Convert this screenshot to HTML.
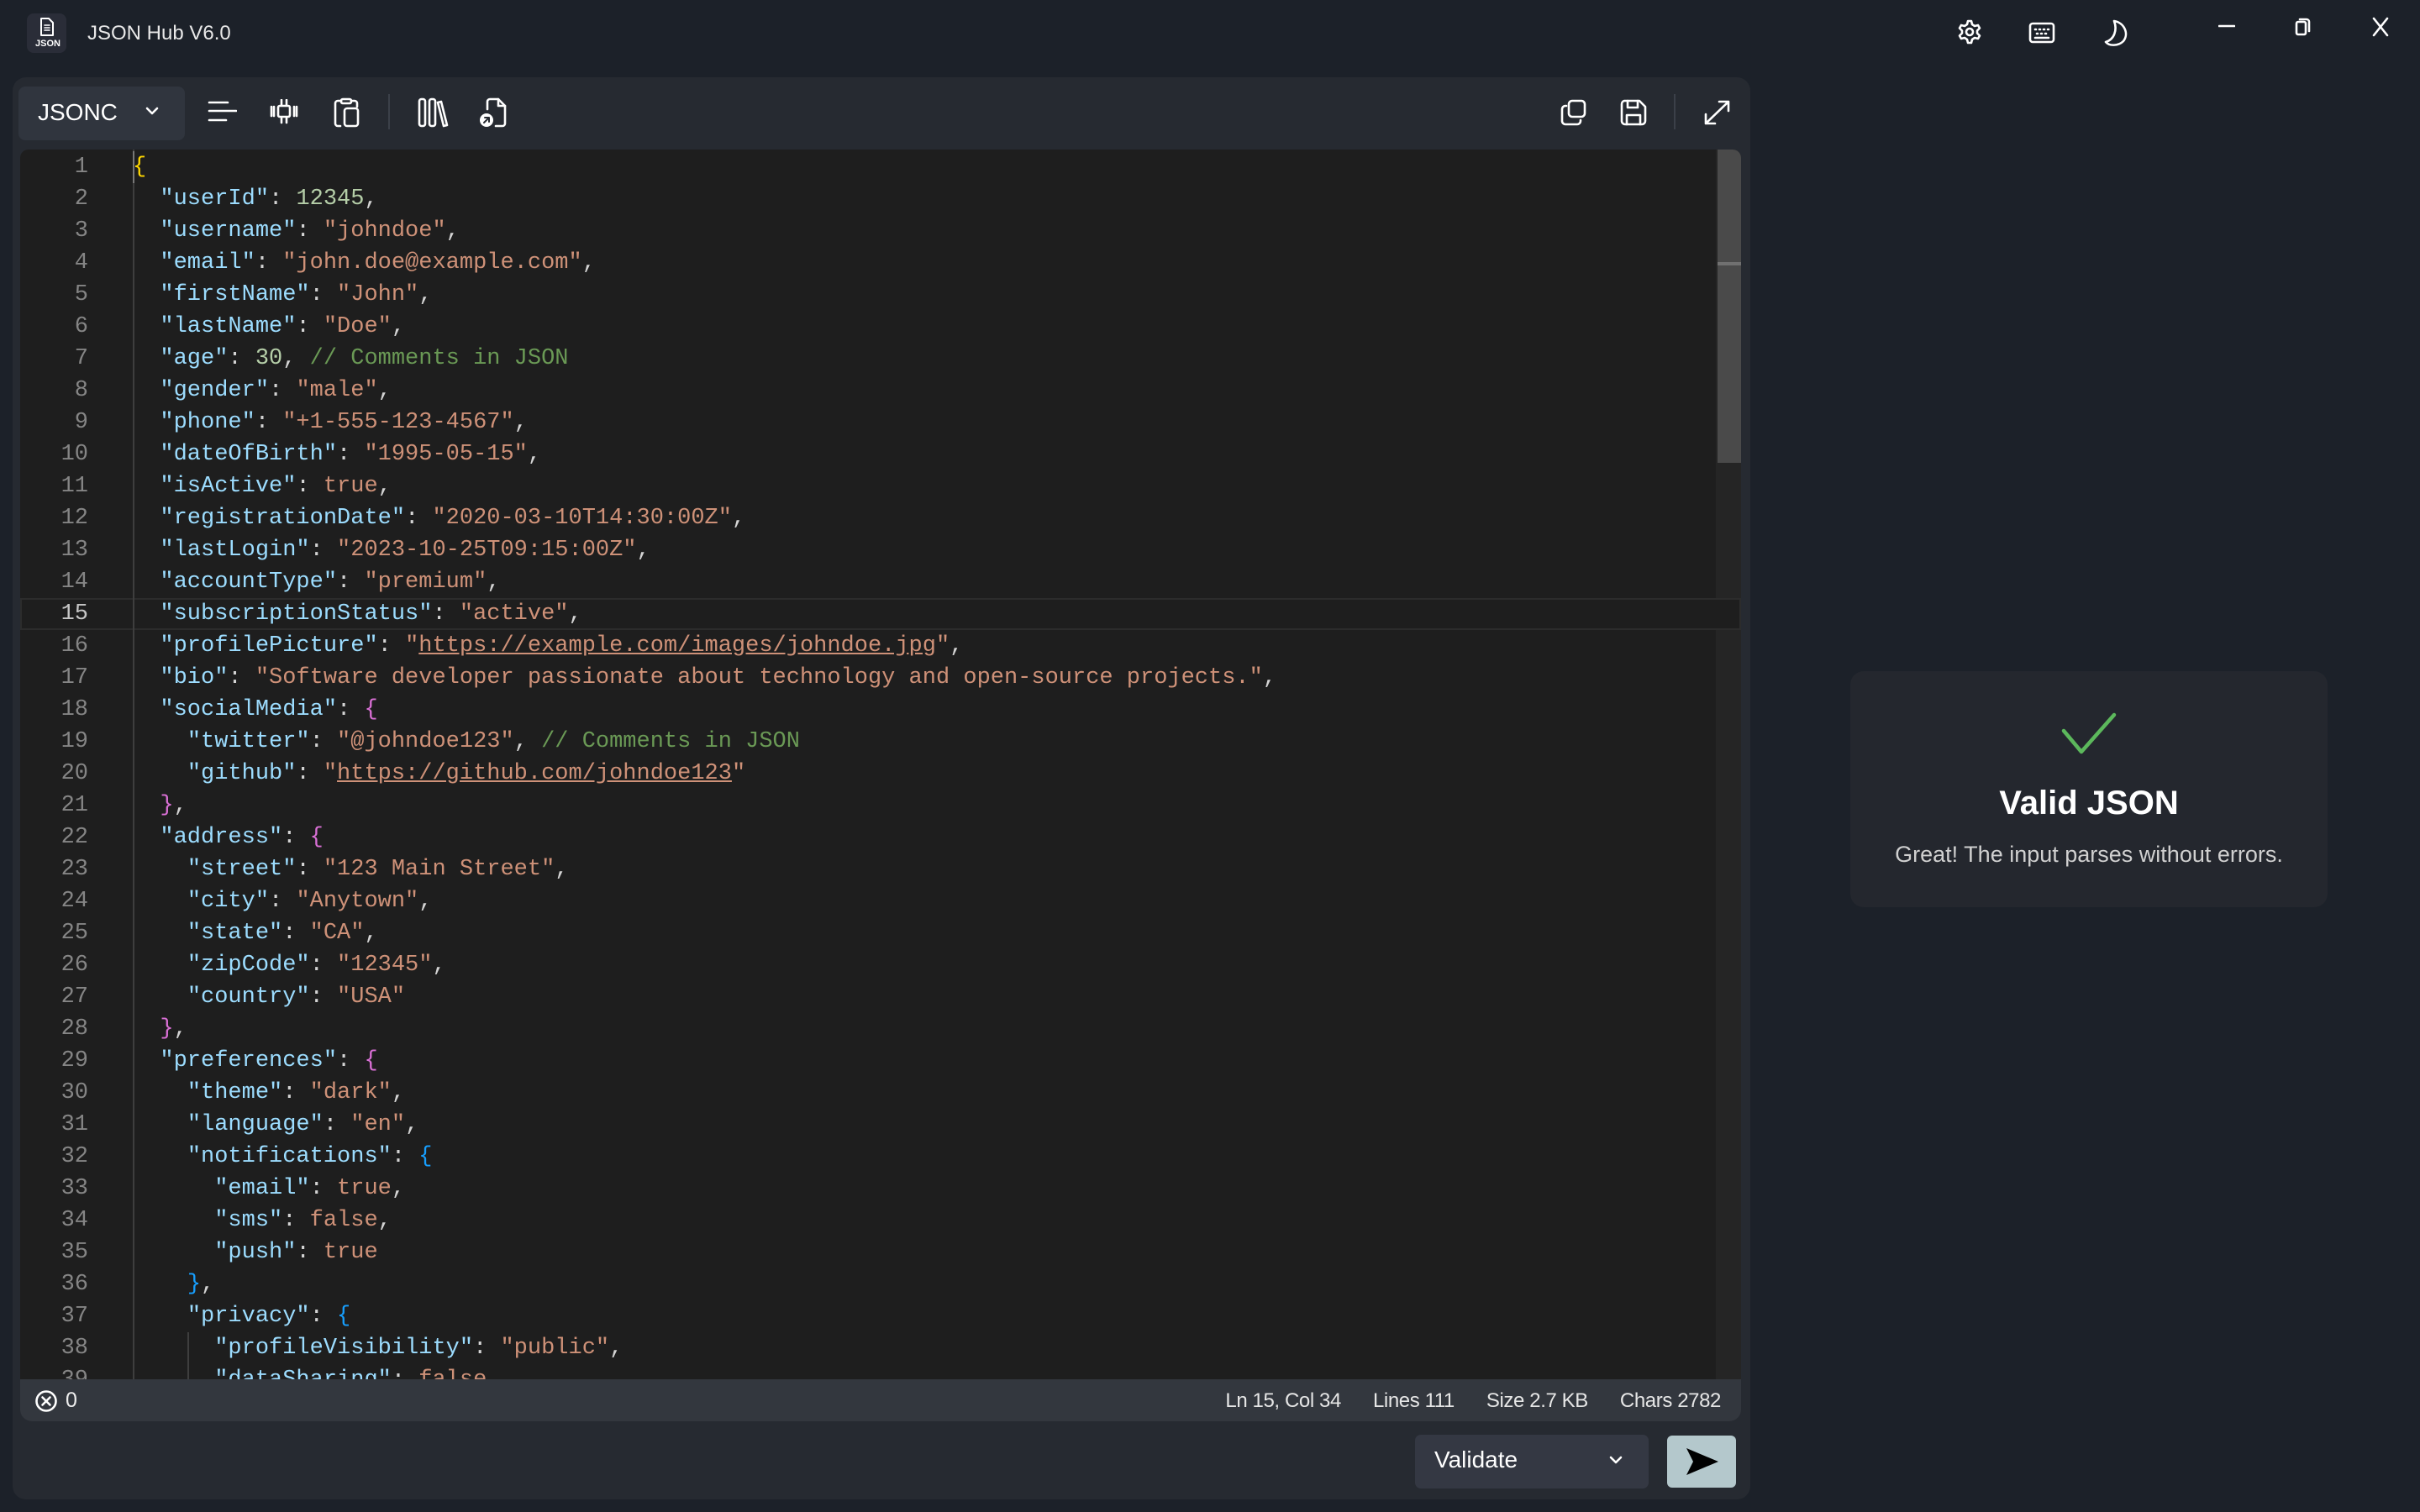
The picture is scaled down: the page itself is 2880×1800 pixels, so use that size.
<!DOCTYPE html>
<html><head><meta charset="utf-8">
<style>
*{margin:0;padding:0;box-sizing:border-box}
body{width:2880px;height:1800px;background:#1c2129;overflow:hidden;position:relative;font-family:"Liberation Sans",sans-serif;color:#e6e6e6}
.abs{position:absolute}
.card{left:15px;top:92px;width:2068px;height:1693px;background:#262a31;border-radius:16px}
.editor{left:24px;top:178px;width:2048px;height:1464px;background:#1e1e1e;overflow:hidden;border-radius:10px 10px 0 0}
.ln{position:absolute;left:0;width:81px;text-align:right;font-family:"Liberation Mono",monospace;font-size:27px;line-height:38px;color:#858585}
.cd{position:absolute;left:134px;white-space:pre;font-family:"Liberation Mono",monospace;font-size:27px;line-height:38px;color:#d4d4d4}
.k{color:#9cdcfe}.s{color:#ce9178}.n{color:#b5cea8}.c{color:#6a9955}.b{color:#ce9178}
.u{text-decoration:underline}
.y{color:#ffd700}.p{color:#da70d6}.bl{color:#179fff}
svg{position:absolute;fill:none;stroke:#fff;stroke-width:2.6;stroke-linecap:round;stroke-linejoin:round}
.st{position:absolute;right:832px;top:1654px;display:flex;gap:38px;font-size:24px;color:#e6e6e6;white-space:pre;letter-spacing:-0.4px}
</style></head><body>
<!-- title bar -->
<div class="abs" style="left:32px;top:16px;width:47px;height:47px;background:#2a2d38;border-radius:8px"></div>
<svg style="left:44px;top:20px" width="24" height="26" viewBox="0 0 24 26"><path d="M5 2h9l5 5v15H5z" stroke-width="2"/><path d="M9 10h6M9 13h6M9 16h6" stroke-width="1.6"/></svg>
<div class="abs" style="left:42px;top:46px;font-size:11px;font-weight:bold;color:#fff">JSON</div>
<div class="abs" style="left:104px;top:26px;font-size:24px;color:#e8e8e8">JSON Hub V6.0</div>
<svg style="left:2328px;top:22px" width="32" height="32" viewBox="0 0 32 32" stroke-width="2"><circle cx="16" cy="16" r="4"/><path d="M14 3h4l1 4 3 2 4-1 2 3.5-3 3v3l3 3-2 3.5-4-1-3 2-1 4h-4l-1-4-3-2-4 1-2-3.5 3-3v-3l-3-3 2-3.5 4 1 3-2z"/></svg>
<svg style="left:2414px;top:26px" width="32" height="26" viewBox="0 0 32 26" stroke-width="2"><rect x="2" y="2" width="28" height="22" rx="3"/><path d="M8 9h1M13 9h1M18 9h1M23 9h1M10 14h1M15 14h1M20 14h1M8 19h16"/></svg>
<svg style="left:2502px;top:22px" width="34" height="34" viewBox="0 0 34 34" stroke-width="2.2"><path d="M14 3C26 5 32 18 25 27C19 33 8 33 4 28C14 25 18 14 14 3z"/></svg>
<svg style="left:2640px;top:28px" width="20" height="6" viewBox="0 0 20 6" stroke-width="2"><path d="M1 3h18"/></svg>
<svg style="left:2730px;top:20px" width="22" height="24" viewBox="0 0 22 24" stroke-width="2"><rect x="3" y="6" width="11" height="15" rx="2"/><path d="M7 3h8a3 3 0 0 1 3 3v11"/></svg>
<svg style="left:2822px;top:20px" width="22" height="24" viewBox="0 0 22 24" stroke-width="2"><path d="M3 2l16 20M19 2L3 22"/></svg>

<div class="abs card"></div>
<!-- toolbar -->
<div class="abs" style="left:22px;top:103px;width:198px;height:64px;background:#30353e;border-radius:8px"></div>
<div class="abs" style="left:45px;top:118px;font-size:28px;color:#fff">JSONC</div>
<svg style="left:172px;top:126px" width="18" height="12" viewBox="0 0 18 12" stroke-width="2"><path d="M3 3l6 6 6-6"/></svg>
<svg style="left:246px;top:118px" width="36" height="30" viewBox="0 0 36 30"><path d="M3 4h22M3 14h32M3 25h20"/></svg>
<svg style="left:320px;top:118px" width="36" height="30" viewBox="0 0 36 30" stroke-width="2.2"><rect x="11" y="8" width="14" height="13" rx="2"/><path d="M15 1v6M21 1v6M15 22v6M21 22v6M3 9v11M6 9v11M30 9v11M33 9v11"/></svg>
<svg style="left:396px;top:116px" width="34" height="36" viewBox="0 0 34 36"><rect x="10" y="2" width="12" height="5" rx="2"/><path d="M10 4H6a3 3 0 0 0-3 3v24a3 3 0 0 0 3 3h3M22 4h4a3 3 0 0 1 3 3v4"/><rect x="14" y="13" width="16" height="21" rx="3"/></svg>
<div class="abs" style="left:462px;top:112px;width:2px;height:42px;background:#3b4049"></div>
<svg style="left:496px;top:116px" width="38" height="36" viewBox="0 0 38 36"><rect x="3" y="2" width="7" height="32" rx="2.5"/><rect x="15" y="2" width="7" height="32" rx="2.5"/><path d="M25 6l4-1 7 28-4 1z"/></svg>
<svg style="left:568px;top:116px" width="36" height="36" viewBox="0 0 36 36"><path d="M12 14V5a3 3 0 0 1 3-3h10l8 8v21a3 3 0 0 1-3 3h-8"/><path d="M25 2v8h8"/><circle cx="11" cy="27" r="8" fill="#fff" stroke="none"/><path d="M8 30l6-6M9 24h5v5" stroke="#262a31" stroke-width="2"/></svg>
<svg style="left:1856px;top:118px" width="32" height="32" viewBox="0 0 32 32"><rect x="11" y="2" width="19" height="19" rx="4"/><path d="M8 8H7a4 4 0 0 0-4 4v14a4 4 0 0 0 4 4h14a4 4 0 0 0 4-4v-1"/></svg>
<svg style="left:1928px;top:118px" width="32" height="32" viewBox="0 0 32 32"><path d="M5 2h18l7 7v17a4 4 0 0 1-4 4H6a4 4 0 0 1-4-4V6a4 4 0 0 1 3-4z"/><path d="M9 2v8h12V2M8 30V19h16v11"/></svg>
<div class="abs" style="left:1992px;top:112px;width:2px;height:42px;background:#3b4049"></div>
<svg style="left:2026px;top:118px" width="34" height="32" viewBox="0 0 34 32"><path d="M4 29L31 3M20 3h11v11M4 18v11h11"/></svg>

<!-- editor -->
<div class="abs editor">
<div class="abs" style="left:0;top:534px;width:2048px;height:38px;border:2px solid #2c2c2c;background:#1e1e1e"></div>
<div class="abs" style="left:134px;top:0;width:2px;height:1464px;background:#3e3e3e"></div>
<div class="abs" style="left:134px;top:2px;width:2px;height:38px;background:#777"></div>
<div class="abs" style="left:199px;top:1408px;width:2px;height:60px;background:#3e3e3e"></div>
<div class="abs" style="left:2018px;top:0;width:30px;height:534px;background:#252525"></div>
<div class="abs" style="left:2018px;top:572px;width:30px;height:900px;background:#252525"></div>
<div class="abs" style="left:2020px;top:0;width:28px;height:373px;background:#4a4a4a"></div>
<div class="abs" style="left:2020px;top:134px;width:28px;height:4px;background:#707070"></div>
<div class="ln" style="top:2px">1<br>2<br>3<br>4<br>5<br>6<br>7<br>8<br>9<br>10<br>11<br>12<br>13<br>14<br><span style="color:#c6c6c6">15</span><br>16<br>17<br>18<br>19<br>20<br>21<br>22<br>23<br>24<br>25<br>26<br>27<br>28<br>29<br>30<br>31<br>32<br>33<br>34<br>35<br>36<br>37<br>38<br>39</div>
<div class="cd" style="top:2px"><span class="y">{</span>
  <span class="k">"userId"</span>: <span class="n">12345</span>,
  <span class="k">"username"</span>: <span class="s">"johndoe"</span>,
  <span class="k">"email"</span>: <span class="s">"john.doe@example.com"</span>,
  <span class="k">"firstName"</span>: <span class="s">"John"</span>,
  <span class="k">"lastName"</span>: <span class="s">"Doe"</span>,
  <span class="k">"age"</span>: <span class="n">30</span>, <span class="c">// Comments in JSON</span>
  <span class="k">"gender"</span>: <span class="s">"male"</span>,
  <span class="k">"phone"</span>: <span class="s">"+1-555-123-4567"</span>,
  <span class="k">"dateOfBirth"</span>: <span class="s">"1995-05-15"</span>,
  <span class="k">"isActive"</span>: <span class="b">true</span>,
  <span class="k">"registrationDate"</span>: <span class="s">"2020-03-10T14:30:00Z"</span>,
  <span class="k">"lastLogin"</span>: <span class="s">"2023-10-25T09:15:00Z"</span>,
  <span class="k">"accountType"</span>: <span class="s">"premium"</span>,
  <span class="k">"subscriptionStatus"</span>: <span class="s">"active"</span>,
  <span class="k">"profilePicture"</span>: <span class="s">"<span class="u">https://example.com/images/johndoe.jpg</span>"</span>,
  <span class="k">"bio"</span>: <span class="s">"Software developer passionate about technology and open-source projects."</span>,
  <span class="k">"socialMedia"</span>: <span class="p">{</span>
    <span class="k">"twitter"</span>: <span class="s">"@johndoe123"</span>, <span class="c">// Comments in JSON</span>
    <span class="k">"github"</span>: <span class="s">"<span class="u">https://github.com/johndoe123</span>"</span>
  <span class="p">}</span>,
  <span class="k">"address"</span>: <span class="p">{</span>
    <span class="k">"street"</span>: <span class="s">"123 Main Street"</span>,
    <span class="k">"city"</span>: <span class="s">"Anytown"</span>,
    <span class="k">"state"</span>: <span class="s">"CA"</span>,
    <span class="k">"zipCode"</span>: <span class="s">"12345"</span>,
    <span class="k">"country"</span>: <span class="s">"USA"</span>
  <span class="p">}</span>,
  <span class="k">"preferences"</span>: <span class="p">{</span>
    <span class="k">"theme"</span>: <span class="s">"dark"</span>,
    <span class="k">"language"</span>: <span class="s">"en"</span>,
    <span class="k">"notifications"</span>: <span class="bl">{</span>
      <span class="k">"email"</span>: <span class="b">true</span>,
      <span class="k">"sms"</span>: <span class="b">false</span>,
      <span class="k">"push"</span>: <span class="b">true</span>
    <span class="bl">}</span>,
    <span class="k">"privacy"</span>: <span class="bl">{</span>
      <span class="k">"profileVisibility"</span>: <span class="s">"public"</span>,
      <span class="k">"dataSharing"</span>: <span class="b">false</span></div>
</div>
<!-- status bar -->
<div class="abs" style="left:24px;top:1642px;width:2048px;height:50px;background:#33373e;border-radius:0 0 14px 14px"></div>
<svg style="left:41px;top:1654px" width="28" height="28" viewBox="0 0 28 28" stroke-width="2"><circle cx="14" cy="14" r="11.5"/><path d="M9.5 9.5l9 9M18.5 9.5l-9 9"/></svg>
<div class="abs" style="left:78px;top:1653px;font-size:25px;color:#eee">0</div>
<div class="st"><span>Ln 15, Col 34</span><span>Lines 111</span><span>Size 2.7 KB</span><span>Chars 2782</span></div>
<!-- bottom -->
<div class="abs" style="left:1684px;top:1708px;width:278px;height:64px;background:#343843;border-radius:7px"></div>
<div class="abs" style="left:1707px;top:1722px;font-size:28px;color:#fff">Validate</div>
<svg style="left:1914px;top:1732px" width="18" height="12" viewBox="0 0 18 12" stroke-width="2"><path d="M3 3l6 6 6-6"/></svg>
<div class="abs" style="left:1984px;top:1709px;width:82px;height:62px;background:#b4c8cc;border-radius:6px"></div>
<svg style="left:2005px;top:1722px;fill:#000;stroke:none" width="42" height="36" viewBox="0 0 42 36"><path d="M2 2l38 16L2 34l8-16z"/></svg>
<!-- result card -->
<div class="abs" style="left:2202px;top:799px;width:568px;height:281px;background:#24272e;border-radius:16px"></div>
<svg style="left:2450px;top:846px;stroke:#5cb85c;stroke-width:4.5" width="76" height="58" viewBox="0 0 76 58"><path d="M6 24l21 25L66 5"/></svg>
<div class="abs" style="left:2202px;top:934px;width:568px;text-align:center;font-size:40px;font-weight:bold;color:#fff">Valid JSON</div>
<div class="abs" style="left:2202px;top:1002px;width:568px;text-align:center;font-size:27px;color:#d0d0d0">Great! The input parses without errors.</div>
</body></html>
